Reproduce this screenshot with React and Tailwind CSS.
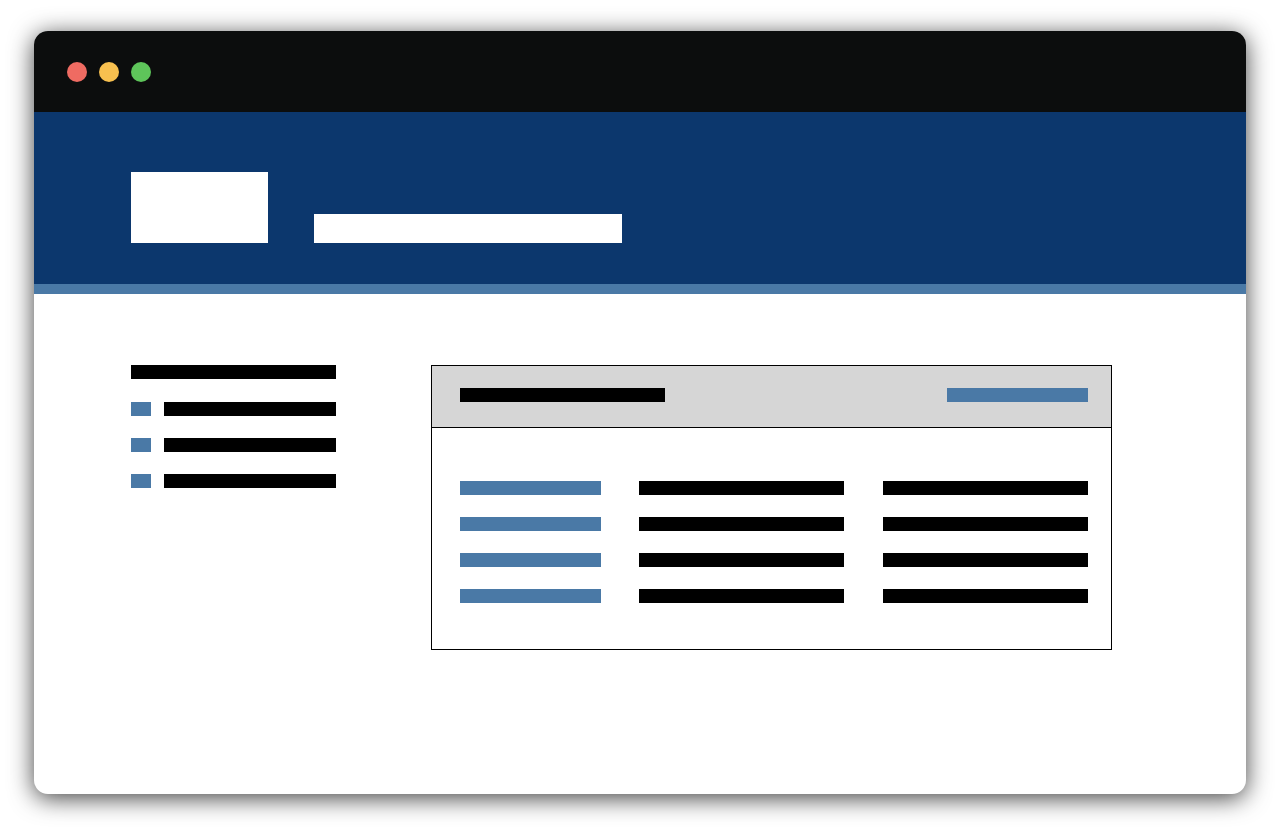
import React from "react";

const rows = [0, 1, 2, 3];
const navItems = [0, 1, 2];

function TrafficLights() {
  return (
    <div className="flex items-center gap-3 pl-[33px]">
      <span className="w-5 h-5 rounded-full bg-[#ef6b62]"></span>
      <span className="w-5 h-5 rounded-full bg-[#f8c04f]"></span>
      <span className="w-5 h-5 rounded-full bg-[#5ec55a]"></span>
    </div>
  );
}

function Sidebar() {
  return (
    <div className="w-[205px] flex flex-col">
      {/* section heading */}
      <div className="h-[14px] bg-black"></div>
      <div className="flex flex-col gap-[22px] mt-[23px]">
        {navItems.map((i) => (
          <div key={i} className="flex gap-[13px]">
            <div className="w-5 h-[14px] bg-[#4a79a6]"></div>
            <div className="flex-1 h-[14px] bg-black"></div>
          </div>
        ))}
      </div>
    </div>
  );
}

function DataTable() {
  return (
    <div className="w-[681px] h-[285px] border border-black flex flex-col">
      {/* table header */}
      <div className="h-[62px] bg-[#d6d6d6] border-b border-black flex justify-between pl-7 pr-[23px] pt-[22px]">
        <div className="w-[205px] h-[14px] bg-black"></div>
        <div className="w-[141px] h-[14px] bg-[#4a79a6]"></div>
      </div>

      {/* rows */}
      <div className="flex flex-col gap-[22px] pt-[53px] pl-7">
        {rows.map((r) => (
          <div key={r} className="flex">
            <div className="w-[141px] h-[14px] bg-[#4a79a6]"></div>
            <div className="w-[205px] h-[14px] bg-black ml-[38px]"></div>
            <div className="w-[205px] h-[14px] bg-black ml-[39px]"></div>
          </div>
        ))}
      </div>
    </div>
  );
}

export default function App() {
  return (
    <div className="w-[1280px] h-[832px] bg-white pt-[31px] pl-[34px]">
      <div className="w-[1212px] h-[763px] rounded-[14px] overflow-hidden bg-white flex flex-col shadow-[0_4px_24px_rgba(0,0,0,0.75)]">
        {/* title bar */}
        <div className="h-[81px] bg-[#0c0d0d] flex items-center">
          <TrafficLights />
        </div>

        {/* site header */}
        <div className="h-[172px] bg-[#0c376d] flex items-end gap-[46px] pl-[97px] pb-[41px]">
          <div className="w-[137px] h-[71px] bg-white"></div>
          <div className="w-[308px] h-[29px] bg-white"></div>
        </div>
        <div className="h-[10px] bg-[#4a79a6]"></div>

        {/* main content */}
        <div className="flex gap-[95px] pl-[97px] pt-[71px]">
          <Sidebar />
          <DataTable />
        </div>
      </div>
    </div>
  );
}
